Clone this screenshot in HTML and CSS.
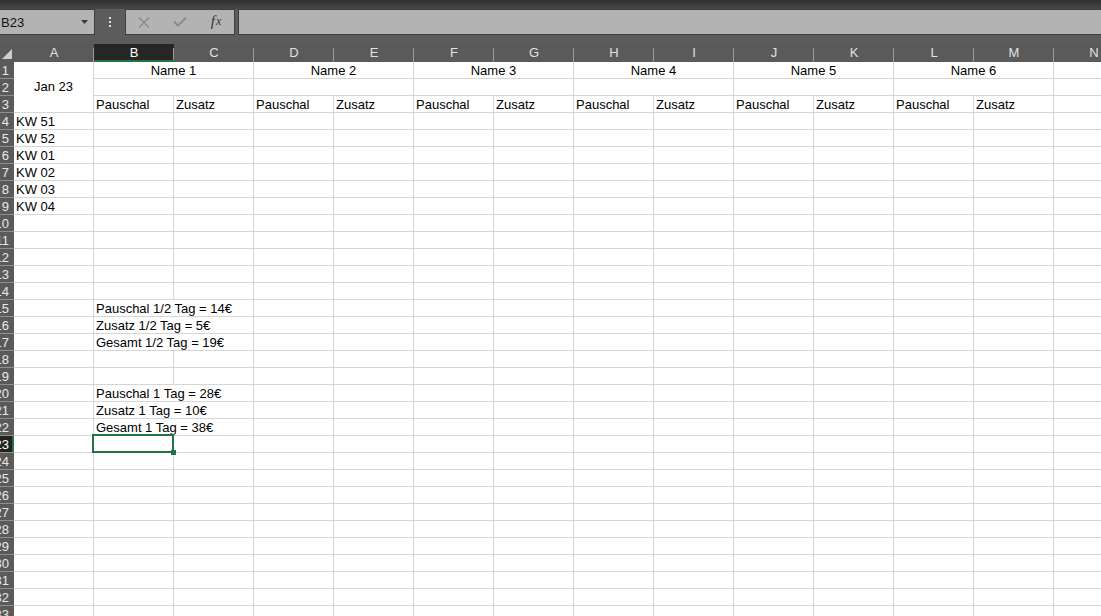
FILE: index.html
```html
<!DOCTYPE html>
<html lang="de">
  <head>
    <meta charset="UTF-8" />
    <meta name="viewport" content="width=device-width, initial-scale=1.0" />
    <title>Mappe1 - Excel</title>
    <link rel="stylesheet" href="styles.css">
  </head>
  <body>
    <div class="app">
      <div class="titlebar"></div>

      <div class="formula-bar">
        <div class="name-box">
          <span>B23</span>
          <svg class="caret" width="7" height="4" viewBox="0 0 7 4"><path d="M0 0H7L3.5 4Z" fill="#3a3a3a"/></svg>
        </div>
        <div class="grip">
          <svg width="2" height="10" viewBox="0 0 2 10"><rect y="0" width="2" height="2"/><rect y="4" width="2" height="2"/><rect y="8" width="2" height="2"/></svg>
        </div>
        <div class="fx-box">
          <span class="fx-btn">
            <svg width="12" height="11" viewBox="0 0 12 11"><path d="M1 0.5L11 10.5M11 0.5L1 10.5" stroke="#8a8a8a" stroke-width="1.4" fill="none"/></svg>
          </span>
          <span class="fx-btn">
            <svg width="14" height="10" viewBox="0 0 14 10"><path d="M1 4.5L5 8.5L13 0.8" stroke="#8a8a8a" stroke-width="2" fill="none"/></svg>
          </span>
          <span class="fx-btn fx">f<span class="fx-x">x</span></span>
        </div>
        <div class="formula-input"></div>
      </div>

      <div class="sheet" id="sheet"></div>
    </div>

    <script>
      const sheet = document.getElementById("sheet");
      const letters = "ABCDEFGHIJKLMN".split("");
      const activeCol = "B";
      const activeRow = 23;
      const rowCount = 33;

      const weeks = { 4: "KW 51", 5: "KW 52", 6: "KW 01", 7: "KW 02", 8: "KW 03", 9: "KW 04" };
      const notes = {
        15: "Pauschal 1/2 Tag = 14€",
        16: "Zusatz 1/2 Tag = 5€",
        17: "Gesamt 1/2 Tag = 19€",
        20: "Pauschal 1 Tag = 28€",
        21: "Zusatz 1 Tag = 10€",
        22: "Gesamt 1 Tag = 38€",
      };

      const addCell = (cls, text) => {
        const div = document.createElement("div");
        div.className = "cell " + (cls || "");
        if (text) div.textContent = text;
        sheet.appendChild(div);
        return div;
      };

      // column headers
      const corner = addCell("corner");
      corner.innerHTML = '<svg width="10" height="10" viewBox="0 0 10 10"><path d="M10 0V10H0Z" fill="#cfcfcf"/></svg>';
      letters.forEach((l) => addCell("col-head" + (l === activeCol ? " active" : ""), l));

      for (let r = 1; r <= rowCount; r++) {
        const head = addCell("row-head" + (r === activeRow ? " active" : ""));
        head.innerHTML = `<span>${r}</span>`;

        if (r === 1) {
          addCell("merge-rows center", "Jan 23");
          for (let n = 1; n <= 6; n++) addCell("span2 center", `Name ${n}`);
          addCell();
        } else if (r === 2) {
          for (let n = 1; n <= 6; n++) addCell("span2");
          addCell();
        } else if (r === 3) {
          for (let n = 1; n <= 6; n++) {
            addCell("", "Pauschal");
            addCell("", "Zusatz");
          }
          addCell();
        } else {
          addCell("", weeks[r]);
          let rest = 13;
          if (notes[r]) {
            addCell("span2", notes[r]);
            rest -= 2;
          } else if (r === activeRow) {
            addCell("selected");
            rest -= 1;
          }
          for (let c = 0; c < rest; c++) addCell();
        }
      }
    </script>
  </body>
</html>
```

FILE: styles.css
```css
html,
body {
  margin: 0;
  height: 100%;
  overflow: hidden;
  background-color: #5a5a5a;
  font-family: "Liberation Sans", Arial, sans-serif;
}
.app {
  width: 100%;
  height: 100%;
  overflow: hidden;
}
.titlebar {
  height: 9px;
  background: linear-gradient(#2f2f2f, #474747);
}
.formula-bar {
  display: flex;
  height: 26px;
  padding-bottom: 9px;
  background-color: #5c5c5c;
}
.name-box {
  box-sizing: border-box;
  width: 96px;
  margin-left: -1px;
  padding: 0 6px 0 1px;
  display: flex;
  align-items: center;
  justify-content: space-between;
  background-color: #b3b3b3;
  border: 1px solid #3e3e3e;
  font-size: 13px;
  color: #111;
}
.grip {
  width: 30px;
  display: flex;
  align-items: center;
  justify-content: center;
  fill: #dedede;
}
.fx-box {
  box-sizing: border-box;
  width: 110px;
  display: flex;
  background-color: #b3b3b3;
  border: 1px solid #3e3e3e;
}
.fx-btn {
  width: 36px;
  display: flex;
  align-items: center;
  justify-content: center;
}
.fx {
  font-family: "Liberation Serif", "Times New Roman", serif;
  font-style: italic;
  font-size: 15px;
  color: #333;
  padding-bottom: 1px;
}
.fx-x {
  font-size: 12px;
  margin-left: 1px;
}
.formula-input {
  flex: 1;
  margin-left: 3px;
  margin-right: -2px;
  background-color: #b3b3b3;
  border: 1px solid #3e3e3e;
}

/* grid */
.sheet {
  display: grid;
  grid-template-columns: 14px repeat(14, 80px);
  grid-template-rows: 18px;
  grid-auto-rows: 17px;
  width: 1134px;
  background-color: #fff;
}
.cell {
  box-sizing: border-box;
  padding: 0 2px;
  border-right: 1px solid #d6d6d6;
  border-bottom: 1px solid #d6d6d6;
  font-size: 13px;
  line-height: 18px;
  color: #000;
  white-space: nowrap;
  overflow: hidden;
}
.center {
  text-align: center;
}
.span2 {
  grid-column: span 2;
}
.merge-rows {
  grid-row: span 3;
  display: flex;
  align-items: center;
  justify-content: center;
}
.corner {
  display: flex;
  align-items: flex-end;
  justify-content: flex-end;
  padding: 0 2px 3px 0;
  border: none;
  background-color: #5a5a5a;
}
.col-head {
  border: none;
  padding: 0;
  text-align: center;
  line-height: 18px;
  color: #e2e2e2;
  background: linear-gradient(#9a9a9a, #9a9a9a) right bottom / 1px 14px no-repeat, #5a5a5a;
}
.col-head.active {
  color: #fff;
  background: linear-gradient(#9a9a9a, #9a9a9a) right bottom / 1px 14px no-repeat, #262626;
  box-shadow: inset 0 -2px 0 #217346;
}
.row-head {
  display: flex;
  justify-content: flex-end;
  padding: 0 5px 0 0;
  border-right: none;
  border-bottom: 1px solid #8e8e8e;
  line-height: 17px;
  color: #e8e8e8;
  background-color: #5a5a5a;
}
.row-head.active {
  color: #fff;
  background-color: #222;
  box-shadow: inset -2px 0 0 #217346;
}
.selected {
  position: relative;
  overflow: visible;
  z-index: 2;
}
.selected::after {
  content: "";
  position: absolute;
  top: -2px;
  left: -2px;
  right: -1px;
  bottom: -1px;
  border: 2px solid #217346;
}
.selected::before {
  content: "";
  position: absolute;
  right: -3px;
  bottom: -3px;
  width: 5px;
  height: 5px;
  background-color: #217346;
  z-index: 1;
}
```
